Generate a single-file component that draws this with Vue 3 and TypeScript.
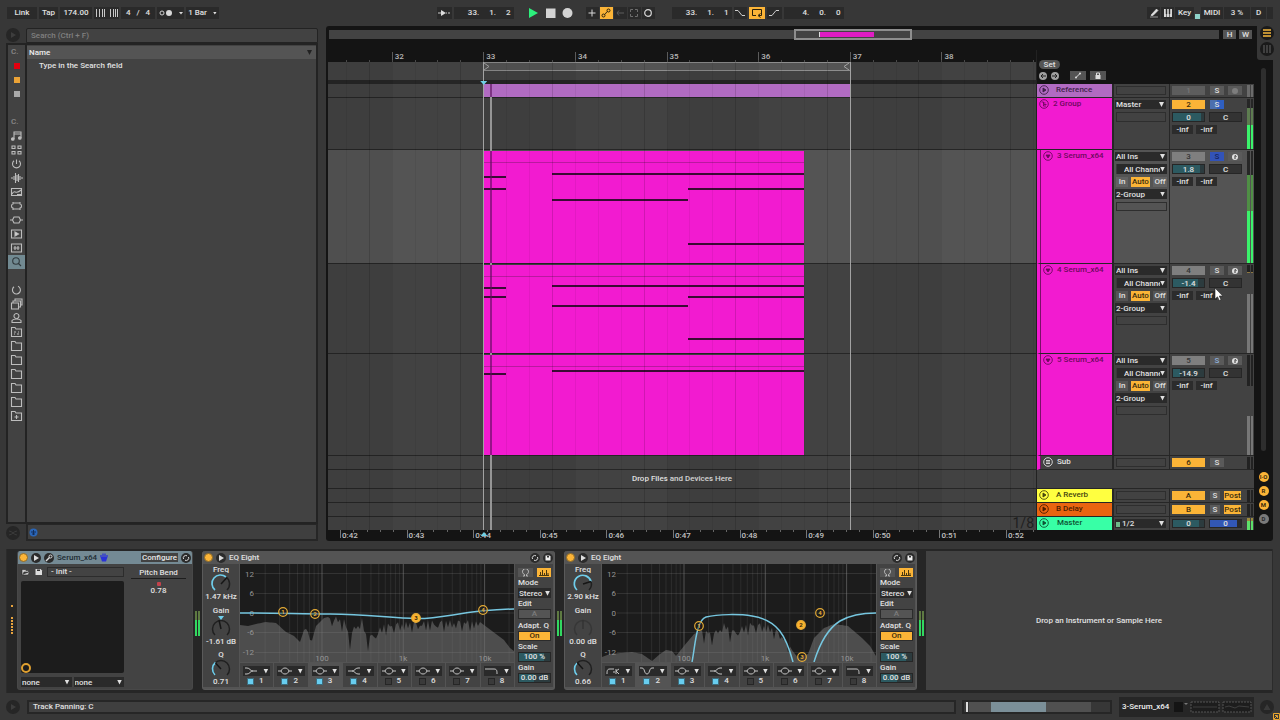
<script setup lang="ts">
import { ref } from 'vue'

interface Note { from: number; to: number; y: number }
interface Track {
  id: string
  name: string
  kind: string
  height: number
  icon: string
  io: string[]
  num: string
  numOn: boolean
  solo: string
  arm: string
  vol?: string
  fill?: number
  pan?: string
  notes?: Note[]
  clipEnd?: number
  meter: string
  cursor?: boolean
}

const LANE = 709
const pct = (px: number) => `${((px / LANE) * 100).toFixed(3)}%`
const barX = (bar: number) => 155.5 + (bar - 33) * 91.75
const bars = [32, 33, 34, 35, 36, 37, 38]
const shades = [31, 33, 35, 37].map((b) => ({ left: pct(Math.max(0, barX(b))), width: pct(b === 31 ? barX(32) : 91.75) }))
const beats = Array.from({ length: 31 }, (_, i) => barX(31.5 + i * 0.25)).filter((x) => x > 0 && x < LANE - 2)
const ticks = beats.map((x) => ({ left: pct(x) }))
const times = Array.from({ length: 11 }, (_, i) => ({ label: `0:${42 + i}`, left: pct(12 + i * 66.6) }))
const timeTicks = Array.from({ length: 53 }, (_, i) => ({ left: pct(12 + i * 13.32) }))
const crossing = (end: number) => ({ left: `${(6.5 / ((end - 33) * 91.75)) * 100}%` })

const tracks: Track[] = [
  { id: 'ref', name: 'Reference', kind: 'violet', height: 14, icon: 'play', io: ['blank'], num: '1', numOn: false, solo: '', arm: 'dot', clipEnd: 37, meter: 'm-idle' },
  { id: 'group', name: '2 Group', kind: 'pink', height: 52, icon: 'fold', io: ['Master', 'blank'], num: '2', numOn: true, solo: 'half', arm: '', vol: '0', fill: 90, pan: 'C', meter: 'm-group' },
  {
    id: 't3', name: '3 Serum_x64', kind: 'pink', height: 114, icon: 'down', io: ['All Ins', 'All Channels', 'monitor', '2-Group', 'blank'], num: '3', numOn: false, solo: 'on', arm: 'ready', vol: '1.8', fill: 86, pan: 'C', clipEnd: 36.5, meter: 'm-live',
    notes: [{ from: 0, to: 7, y: 25 }, { from: 0, to: 7, y: 37 }, { from: 21.5, to: 100, y: 22 }, { from: 21.5, to: 64, y: 48 }, { from: 64, to: 100, y: 37 }, { from: 64, to: 100, y: 92 }],
  },
  {
    id: 't4', name: '4 Serum_x64', kind: 'pink', height: 90, icon: 'down', io: ['All Ins', 'All Channels', 'monitor', '2-Group', 'blank'], num: '4', numOn: false, solo: '', arm: 'ready', vol: '-1.4', fill: 80, pan: 'C', clipEnd: 36.5, meter: 'm-low', cursor: true,
    notes: [{ from: 0, to: 7, y: 22 }, { from: 0, to: 7, y: 31 }, { from: 21.5, to: 100, y: 20 }, { from: 21.5, to: 64, y: 40 }, { from: 64, to: 100, y: 31 }, { from: 64, to: 100, y: 73 }],
  },
  {
    id: 't5', name: '5 Serum_x64', kind: 'pink', height: 102, icon: 'down', io: ['All Ins', 'All Channels', 'monitor', '2-Group', 'blank'], num: '5', numOn: false, solo: 'faint', arm: 'ready', vol: '-14.9', fill: 22, pan: 'C', clipEnd: 36.5, meter: 'm-tail',
    notes: [{ from: 0, to: 7, y: 18 }, { from: 21.5, to: 100, y: 15 }],
  },
  { id: 'sub', name: 'Sub', kind: 'grey', height: 14, icon: 'lines', io: ['blank'], num: '6', numOn: true, solo: '', arm: '', meter: 'm-off' },
]
const returns = [
  { id: 'A', name: 'A Reverb', kind: 'yellow' },
  { id: 'B', name: 'B Delay', kind: 'orange' },
]

const places = ['music', 'drums', 'instr', 'audio', 'midi', 'max', 'plug', 'clip', 'sample', 'search', 'gap', 'ring', 'packs', 'user', 'project', 'folder', 'folder', 'folder', 'folder', 'folder', 'add']

type Pt = [number, number]
const xf = (f: number) => 82 + 81.3 * Math.log10(f / 100)
const gridX: { x: number; major: boolean }[] = []
for (const d of [10, 100, 1000, 10000]) {
  for (let k = 1; k < 10; k++) {
    const x = xf(d * k)
    if (x > 3 && x < 274) gridX.push({ x, major: k === 1 })
  }
}
function spectrum(env: Pt[], from: number, to: number, amp: number): string {
  const out: string[] = ['0,98']
  for (let x = 0; x <= 274; x += 2) {
    let i = 0
    while (i < env.length - 2 && env[i + 1][0] < x) i++
    const [x0, y0] = env[i]
    const [x1, y1] = env[i + 1]
    let y = y0 + ((y1 - y0) * (x - x0)) / (x1 - x0)
    if (x > from && x < to) {
      const n = Math.abs(Math.sin(x * 1.93) * Math.cos(x * 0.71))
      y += n * n * amp
    }
    out.push(`${x},${y.toFixed(1)}`)
  }
  out.push('274,98')
  return out.join(' ')
}
const devices = [
  {
    id: 'eq1', freq: '1.47 kHz', gain: '-1.61 dB', q: '0.71', gainOn: true, active: 3,
    arc: 'M5 16 A8.500 8.500 0 0 1 16 3', rest: 'M16 3 A8.500 8.500 0 0 1 17 16', needle: 'M11 10 L16.500 4', gneedle: 'M11 14 L9 5', qneedle: 'M11 10 L5.500 4', qarc: 'M5 16 A8.500 8.500 0 0 1 5.500 3.500',
    types: ['lowshelf', 'bell', 'bell', 'highshelf', 'bell', 'bell', 'bell', 'cut'],
    curve: ['M0 49 C40 49 60 50 90 50 C130 50 150 54.500 178 54.500 C205 54.500 225 46 274 45'],
    dots: [{ n: 1, x: 43, y: 48, on: false }, { n: 2, x: 75, y: 50, on: false }, { n: 3, x: 176, y: 54, on: true }, { n: 4, x: 243, y: 46, on: false }],
    spec: spectrum([[0, 61], [8, 62], [25, 58], [36, 59], [46, 68], [54, 72], [60, 78], [64, 66], [67, 64], [71, 80], [76, 62], [84, 54], [92, 51], [104, 55], [110, 72], [115, 60], [122, 54], [127, 74], [134, 68], [144, 60], [158, 58], [180, 57], [210, 56], [230, 56], [240, 58], [252, 67], [264, 76], [270, 84], [274, 87]], 84, 240, 18),
  },
  {
    id: 'eq2', freq: '2.90 kHz', gain: '0.00 dB', q: '0.66', gainOn: false, active: 2,
    arc: 'M5 16 A8.500 8.500 0 1 1 19 7.500', rest: 'M19 7.500 A8.500 8.500 0 0 1 17 16', needle: 'M11 10 L19 7.500', gneedle: 'M11 14 L11 5', qneedle: 'M11 10 L5.500 4', qarc: 'M5 16 A8.500 8.500 0 0 1 5 4',
    types: ['highpass', 'notch', 'bell', 'highshelf', 'bell', 'bell', 'bell', 'cut'],
    curve: ['M90 98 C93 84 94 56 104 53 C116 50 138 50 150 52 C176 56 184 72 191 98', 'M212 98 C220 72 230 62 238 57 C250 50 262 49 274 49'],
    dots: [{ n: 1, x: 97, y: 62, on: false }, { n: 2, x: 199, y: 61, on: true }, { n: 3, x: 200, y: 93, on: false }, { n: 4, x: 218, y: 49, on: false }],
    spec: spectrum([[0, 93], [8, 90], [30, 88], [40, 90], [50, 97], [58, 90], [64, 86], [70, 87], [74, 92], [82, 82], [92, 70], [100, 66], [112, 68], [121, 58], [130, 66], [150, 58], [165, 60], [180, 68], [190, 86], [196, 94], [206, 90], [212, 74], [222, 64], [232, 60], [246, 62], [260, 74], [268, 82], [274, 92]], 100, 190, 18),
  },
]
const bandPaths: Record<string, string> = {
  lowshelf: 'M1 2 H3 C6 2 6 5 9 5 H13 M1 8 H3 C6 8 6 5 9 5',
  highshelf: 'M1 5 H5 C8 5 8 2 11 2 H13 M5 5 C8 5 8 8 11 8 H13',
  bell: 'M0 5 H3 C4 3 5 2 7 2 C9 2 10 3 11 5 H14 M3 5 C4 7 5 8 7 8 C9 8 10 7 11 5',
  cut: 'M0 3 H9 C12 3 12 5 12 8',
  highpass: 'M1 8 C1 5 1 3 4 3 H8 M7 6 H9 M10 3 V8 M10 5 L13 3 M10 5 L13 8',
  notch: 'M0 2 H2 C5 2 4 8 7 8 C10 8 9 2 12 2 H14',
}
const bandOn = ref([true, true, true, true, false, false, false, false])
const search = ref('')
</script>

<template>
  <div class="app">
    <header class="topbar">
      <div class="group">
        <button class="cell w-link">Link</button>
        <button class="cell w-tap">Tap</button>
        <button class="cell w-tempo">174.00</button>
        <button class="cell w-nudge" aria-label="Nudge tempo">
          <svg width="24" height="8" viewBox="0 0 24 8"><path d="M1.500 0V8M4.500 0V8M7.500 0V8M9.500 0V8M15.500 0V8M18.500 0V8M20.500 0V8M22.500 0V8" stroke="#c8c8c8" /></svg>
        </button>
        <button class="cell w-sig"><span>4</span><span>/</span><span>4</span></button>
        <button class="cell w-metro" aria-label="Metronome">
          <svg width="24" height="8" viewBox="0 0 24 8"><circle cx="3" cy="4" r="2" fill="none" stroke="#d0d0d0" /><circle cx="10" cy="4" r="3" fill="#d8d8d8" /><path d="M20 3h4l-2 2.500z" fill="#d8d8d8" /></svg>
        </button>
        <button class="cell w-quant">1 Bar<i class="tri small"></i></button>
      </div>
      <div class="group">
        <button class="cell w-15" aria-label="Follow">
          <svg width="12" height="8" viewBox="0 0 12 8"><path d="M0 4H3M8 4H9M10 4H12" stroke="#ccc" /><path d="M3 1L8 4L3 7z" fill="#ddd" /></svg>
        </button>
        <div class="cell w-wide"><span>33.</span><span>1.</span><span>2</span></div>
        <div class="transport">
          <button aria-label="Play"><svg width="11" height="12" viewBox="0 0 11 12"><path d="M1 1L10 6L1 11z" fill="#2cf07c" /></svg></button>
          <button aria-label="Stop"><svg width="11" height="12" viewBox="0 0 11 12"><path d="M1 1.500H10.500V11H1z" fill="#d4d4d4" /></svg></button>
          <button aria-label="Record"><svg width="11" height="12" viewBox="0 0 11 12"><circle cx="5.500" cy="6" r="5" fill="#d4d4d4" /></svg></button>
        </div>
        <div class="tools">
          <button class="cell w-13" aria-label="Overdub"><svg width="10" height="10" viewBox="0 0 10 10"><path d="M5 1.500V8.500M1.500 5H8.500" stroke="#d8d8d8" /></svg></button>
          <button class="cell w-13 amber" aria-label="Automation arm"><svg width="10" height="10" viewBox="0 0 10 10" fill="none" stroke="#2a210c"><circle cx="2.500" cy="7.500" r="1.500" /><circle cx="7.500" cy="2.500" r="1.500" /><path d="M3.500 6.500C5 6 5 4 6.500 3.500" /></svg></button>
          <button class="cell w-13" aria-label="Re-enable automation"><svg width="10" height="10" viewBox="0 0 10 10" fill="none" stroke="#5d5d5d"><path d="M9 5H2M4 2.500L2 5L4 7.500" /></svg></button>
          <button class="cell w-13" aria-label="Capture"><svg width="10" height="10" viewBox="0 0 10 10" fill="none" stroke="#6d6d6d"><path d="M1.500 4V1.500H4M6 1.500H8.500V4M8.500 6V8.500H6M4 8.500H1.500V6" /></svg></button>
          <button class="cell w-13" aria-label="Session record"><svg width="10" height="10" viewBox="0 0 10 10"><circle cx="5" cy="5" r="3.300" fill="none" stroke="#d8d8d8" stroke-width="1.200" /></svg></button>
        </div>
        <div class="cell w-wide"><span>33.</span><span>1.</span><span>1</span></div>
        <button class="cell w-13" aria-label="Punch in"><svg width="12" height="8" viewBox="0 0 12 8"><path d="M1 1.500H4L8 6.500H11" fill="none" stroke="#ccc" /></svg></button>
        <button class="cell w-16 amber" aria-label="Loop"><svg width="12" height="10" viewBox="0 0 12 10"><path d="M5 7.500H1.500V1.500H10.500V7.500H8M9.500 5.500L7 7.500L9.500 9.500" fill="none" stroke="#2a210c" /></svg></button>
        <button class="cell w-15" aria-label="Punch out"><svg width="12" height="8" viewBox="0 0 12 8"><path d="M1 6.500H4L8 1.500H11" fill="none" stroke="#ccc" /></svg></button>
        <div class="cell w-wide"><span>4.</span><span>0.</span><span>0</span></div>
      </div>
      <div class="group end">
        <button class="cell w-13" aria-label="Draw mode"><svg width="10" height="10" viewBox="0 0 10 10"><path d="M2 7L7.500 1L9 2.500L4 7.500H2zM1 9H9" fill="#e0e0e0" stroke="#e0e0e0" stroke-width=".6" /></svg></button>
        <button class="cell w-13" aria-label="Computer MIDI keyboard"><svg width="10" height="10" viewBox="0 0 10 10"><path d="M1 1H9V9H1z" fill="#d8d8d8" /><path d="M3.500 1V6M6.500 1V6" stroke="#2a2a2a" stroke-width="1.400" /><path d="M3.500 6V9M6.500 6V9" stroke="#2a2a2a" stroke-width=".6" /></svg></button>
        <button class="cell w-key">Key</button>
        <span class="led"></span>
        <button class="cell w-midi">MIDI</button>
        <div class="cell w-cpu">3 %</div>
        <div class="cell w-15">D</div>
        <div class="cell w-tail"></div>
      </div>
    </header>

    <main class="main">
      <section class="browser">
        <button class="round" aria-label="Show browser"><svg width="6" height="6" viewBox="0 0 6 6"><path d="M1 0L6 3L1 6z" fill="#3d3d3d" /></svg></button>
        <input v-model="search" class="search" aria-label="Search" placeholder="Search (Ctrl + F)" />
        <nav class="places">
          <span class="cat">C.</span>
          <span class="pcell"><i class="chip red"></i></span>
          <span class="pcell"><i class="chip gold"></i></span>
          <span class="pcell"><i class="chip silver"></i></span>
          <span class="pcell"></span>
          <span class="cat">C.</span>
          <button v-for="(p, i) in places" :key="i" class="pcell" :class="{ current: p === 'search' }" :aria-label="p">
            <svg width="13" height="12" viewBox="0 0 13 12" fill="none" stroke="#bdbdbd" stroke-width="1.100">
              <template v-if="p === 'music'"><path d="M4 9V2H11V8M4 4H11" /><circle cx="2.800" cy="9" r="1.300" fill="#bdbdbd" /><circle cx="9.800" cy="8" r="1.300" fill="#bdbdbd" /></template>
              <path v-else-if="p === 'drums'" d="M2 2H5V4.500H2zM8 2H11V4.500H8zM2 7.500H5V10H2zM8 7.500H11V10H8z" />
              <path v-else-if="p === 'instr'" d="M6.500 1.500V6M4 2.800A4 4 0 1 0 9 2.800" />
              <path v-else-if="p === 'audio'" d="M1 6H3M4 4V8M5.500 1V11M7 3V9M8.500 2V10M10 4V8M11 6H13" />
              <path v-else-if="p === 'midi'" d="M1.500 2.500H11.500V9.500H1.500zM2 8C5 2 5 10 11 4M7 8.500H11" />
              <path v-else-if="p === 'max'" d="M3 3H10M3 9H10M3 2V4C1 4 1 8 3 8V10M10 2V4C12 4 12 8 10 8V10" />
              <path v-else-if="p === 'plug'" d="M4 3H9L10.500 6L9 9H4L2.500 6zM0 6H2.500M10.500 6H13" />
              <template v-else-if="p === 'clip'"><path d="M1.500 2H11.500V10H1.500z" /><path d="M5 4L8.500 6L5 8z" fill="#ddd" /></template>
              <path v-else-if="p === 'sample'" d="M1.500 2H11.500V10H1.500zM3.500 6H9.500M5 4V8M8 4V8" />
              <template v-else-if="p === 'search'"><circle cx="6" cy="5" r="3.300" stroke="#30393d" /><path d="M8.500 7.500L11 10" stroke="#30393d" /></template>
              <path v-else-if="p === 'ring'" d="M8 2.300A4 4 0 1 1 4 2.800" />
              <path v-else-if="p === 'packs'" d="M1.500 5H8.500V11H1.500zM3 5V3H10.500V9H8.500M5 3V1H12V7H10.500" />
              <path v-else-if="p === 'user'" d="M2 10.500H11V8.500C10 7 8 7 6.500 7C5 7 3 7 2 8.500zM6.500 6.500A2.500 2.500 0 1 0 6.400 6.500" />
              <path v-else-if="p !== 'gap'" d="M1.500 10.500V1.500H5L6 3H11.500V10.500z" />
              <path v-if="p === 'project'" d="M4 6H6M8 6H9M4 8H5M7 8H9" />
              <path v-if="p === 'add'" d="M6.500 5V9M4.500 7H8.500" />
            </svg>
          </button>
        </nav>
        <div class="results">
          <div class="colhead">Name<i class="tri dark"></i></div>
          <p class="hint">Type in the Search field</p>
        </div>
        <button class="round foot" aria-label="Preview"><svg width="8" height="6" viewBox="0 0 8 6"><path d="M0 1C3 1 5 5 8 5M0 5C3 5 5 1 8 1" stroke="#3b3b3b" fill="none" /></svg></button>
        <div class="footer"><svg width="9" height="9" viewBox="0 0 9 9"><circle cx="4.500" cy="4.500" r="4" fill="#2a66b8" /><path d="M2 4H7M4.500 2V7M3 6H6" stroke="#132f5c" fill="none" /></svg></div>
      </section>

      <section class="arranger">
        <div class="view">
          <div class="overview">
            <div class="ovbar"><div class="ovbox"><div class="ovclip"></div></div></div>
            <button class="hw">H</button>
            <button class="hw">W</button>
          </div>
          <div class="timeline">
            <div class="headrow">
              <div class="rulers">
                <div class="ruler">
                  <span v-for="b in bars" :key="b" class="bar" :style="{ left: pct(barX(b)) }">{{ b }}</span>
                  <i v-for="(t, i) in ticks" :key="i" class="tick" :style="t"></i>
                </div>
                <div class="scrub">
                  <div class="loop" :style="{ left: pct(barX(33)), width: pct(367) }">
                    <svg width="7" height="7" viewBox="0 0 7 7"><path d="M1 0L6 3.500L1 7" fill="none" stroke="#a5a5a5" /></svg>
                    <svg width="7" height="7" viewBox="0 0 7 7"><path d="M6 0L1 3.500L6 7" fill="none" stroke="#a5a5a5" /></svg>
                  </div>
                </div>
              </div>
              <div class="locators">
                <button class="set">Set</button>
                <div class="locrow">
                  <button class="arrow" aria-label="Previous locator"><svg width="8" height="8" viewBox="0 0 8 8"><path d="M7 4H2M4 2L2 4L4 6" fill="none" stroke="#222" /></svg></button>
                  <button class="arrow" aria-label="Next locator"><svg width="8" height="8" viewBox="0 0 8 8"><path d="M1 4H6M4 2L6 4L4 6" fill="none" stroke="#222" /></svg></button>
                  <button class="lock first" aria-label="Automation mode"><svg width="8" height="7" viewBox="0 0 8 7"><path d="M2 5.500L6 1.500" stroke="#ddd" /><circle cx="2" cy="5.500" r="1" fill="#ddd" /><circle cx="6" cy="1.500" r="1" fill="#ddd" /></svg></button>
                  <button class="lock" aria-label="Lock envelopes"><svg width="8" height="7" viewBox="0 0 8 7"><path d="M1.500 3H6.500V7H1.500z" fill="#ddd" /><path d="M2.500 3V1H5.500V3" fill="none" stroke="#ddd" /></svg></button>
                </div>
              </div>
            </div>

            <div v-for="t in tracks" :key="t.id" class="track" :class="t.id" :style="{ minHeight: t.height + 'px' }">
              <div class="lane">
                <div v-if="t.clipEnd" class="clip" :class="t.kind" :style="{ left: pct(barX(33)), width: pct((t.clipEnd - 33) * 91.75) }">
                  <i v-for="(n, i) in t.notes" :key="i" class="note" :style="{ left: n.from + '%', width: n.to - n.from + '%', top: n.y + 'px' }"></i>
                  <i class="cross" :style="crossing(t.clipEnd)"></i>
                </div>
              </div>
              <div class="head" :class="t.kind">
                <svg class="ic" width="10" height="10" viewBox="0 0 10 10" fill="none" stroke="currentColor" stroke-width=".9">
                  <circle cx="5" cy="5" r="4.300" />
                  <path v-if="t.icon === 'play'" d="M4 3L7 5L4 7z" fill="currentColor" />
                  <path v-else-if="t.icon === 'down'" d="M3 4H7L5 7z" fill="currentColor" />
                  <path v-else-if="t.icon === 'fold'" d="M2.500 3H4.500V5.500H7.500M4.500 4H6.500M4.500 5.500V7H7" />
                  <path v-else d="M3 3.500H7M3 5H7M3 6.500H7" />
                </svg>
                <span>{{ t.name }}</span>
              </div>
              <div class="io">
                <template v-for="(o, i) in t.io" :key="i">
                  <span v-if="o === 'blank'" class="blank"></span>
                  <div v-else-if="o === 'monitor'" class="monitor"><button>In</button><button class="amber">Auto</button><button>Off</button></div>
                  <div v-else class="sel" :class="{ indent: o === 'All Channels' }"><select :aria-label="t.name + ' routing ' + (i + 1)"><option>{{ o }}</option></select><i class="tri"></i></div>
                </template>
              </div>
              <div class="mix">
                <div class="mrow">
                  <button class="num" :class="{ amber: t.numOn, dim: t.id === 'ref' }">{{ t.num }}</button>
                  <button class="solo" :class="t.solo">S</button>
                  <button v-if="t.arm" class="arm" :class="t.arm" aria-label="Arm"><svg width="8" height="8" viewBox="0 0 8 8"><circle cx="4" cy="4" r="3" fill="currentColor" /><path v-if="t.arm === 'ready'" d="M4 6V2.500L5.500 3.500" stroke="#333" fill="none" /></svg></button>
                </div>
                <div v-if="t.vol" class="mrow">
                  <input class="val vol" :aria-label="t.name + ' volume'" :value="t.vol" :style="{ '--fill': t.fill + '%' }" />
                  <input class="val pan" :aria-label="t.name + ' pan'" :value="t.pan" />
                </div>
                <div v-if="t.vol" class="mrow peaks"><span>-inf</span><span>-inf</span></div>
                <div class="meter" :class="t.meter"><i></i><i></i></div>
                <svg v-if="t.cursor" class="pointer" width="9" height="13" viewBox="0 0 9 13"><path d="M1 0V11L3.500 8.800L5.200 12.500L7 11.700L5.300 8H8.800z" fill="#fff" stroke="#222" stroke-width=".6" /></svg>
              </div>
            </div>

            <div class="drop"><div class="lane">Drop Files and Devices Here</div><div class="rest"></div></div>

            <div v-for="r in returns" :key="r.id" class="track">
              <div class="lane"></div>
              <div class="head" :class="r.kind">
                <svg class="ic" width="10" height="10" viewBox="0 0 10 10" fill="none" stroke="currentColor" stroke-width=".9"><circle cx="5" cy="5" r="4.300" /><path d="M4 3L7 5L4 7z" fill="currentColor" /></svg>
                <span>{{ r.name }}</span>
              </div>
              <div class="io"><span class="blank"></span></div>
              <div class="mix">
                <div class="mrow"><button class="num amber">{{ r.id }}</button><button class="solo narrow">S</button><button class="post amber">Post</button></div>
                <div class="meter m-off"><i></i><i></i></div>
              </div>
            </div>
            <div class="track last">
              <div class="lane zoomlabel">1/8</div>
              <div class="head mint">
                <svg class="ic" width="10" height="10" viewBox="0 0 10 10" fill="none" stroke="currentColor" stroke-width=".9"><circle cx="5" cy="5" r="4.300" /><path d="M4 3L7 5L4 7z" fill="currentColor" /></svg>
                <span>Master</span>
              </div>
              <div class="io"><div class="sel out"><select aria-label="Master output"><option>1/2</option></select><i class="tri"></i></div></div>
              <div class="mix">
                <div class="mrow"><input class="val vol master" aria-label="Master volume" value="0" /><input class="val blue" aria-label="Cue volume" value="0" /></div>
                <div class="meter m-master"><i></i><i></i></div>
              </div>
            </div>

            <div class="gridlay under">
              <i v-for="(s, i) in shades" :key="i" class="shade" :style="s"></i>
              <i class="playhead" :style="{ left: pct(162) }"></i>
            </div>
            <div class="gridlay over">
              <i v-for="(t, i) in ticks" :key="i" class="beat" :style="t"></i>
              <i class="marker" :style="{ left: pct(barX(33)) }"></i>
              <i class="marker" :style="{ left: pct(barX(37)) }"></i>
              <i class="flag" :style="{ left: pct(barX(33)) }"></i>
            </div>
          </div>
          <div class="timeruler">
            <div class="tr">
              <i v-for="(t, i) in timeTicks" :key="i" class="tick" :style="t"></i>
              <span v-for="t in times" :key="t.label" class="time" :style="{ left: t.left }">{{ t.label }}</span>
              <i class="flag" :style="{ left: pct(barX(33)) }"></i>
            </div>
          </div>
        </div>
        <aside class="gutter">
          <div class="tabs">
            <button class="tab" aria-label="Arrangement view"><svg width="14" height="14" viewBox="0 0 14 14"><path d="M3 4H11M3 7H11M3 10H11" stroke="#f3b73c" stroke-width="1.500" /></svg></button>
            <button class="tab" aria-label="Session view"><svg width="14" height="14" viewBox="0 0 14 14"><path d="M4 3V11M7 3V11M10 3V11" stroke="#4c4c4c" stroke-width="1.500" /></svg></button>
          </div>
          <div class="scroll"></div>
          <div class="shows">
            <button>I·O</button><button>R</button><button>M</button><button class="off">D</button>
          </div>
        </aside>
      </section>
    </main>

    <section class="devices">
      <div class="strip"><i v-for="n in 7" :key="n"></i></div>
      <article class="device serum">
        <div class="dhead">
          <i class="power"></i>
          <button class="dbtn" aria-label="Unfold"><svg width="8" height="8" viewBox="0 0 8 8"><path d="M2 1L7 4L2 7z" fill="#ddd" /></svg></button>
          <button class="dbtn" aria-label="Plug-in window"><svg width="8" height="8" viewBox="0 0 8 8"><path d="M1 7L4.500 3.500" stroke="#ddd" stroke-width="1.500" /><circle cx="5.500" cy="2.500" r="1.500" fill="none" stroke="#ddd" /></svg></button>
          <h2>Serum_x64</h2>
          <svg width="8" height="9" viewBox="0 0 8 9"><path d="M1 4V2M3 4V0.500M5 4V0.500M7 4V2" stroke="#2a32d8" stroke-width="1.300" /><path d="M0.500 4H7.500L6 8.500H2z" fill="#2a32d8" /></svg>
          <button class="configure">Configure</button>
          <button class="dbtn" aria-label="Hot-swap"><svg width="8" height="8" viewBox="0 0 8 8" fill="none" stroke="#ddd"><path d="M1.500 5A2.500 2.500 0 0 1 5 1.800M6.500 3A2.500 2.500 0 0 1 3 6.200" /></svg></button>
        </div>
        <div class="sbody">
          <div class="spad">
            <div class="preset">
              <svg width="9" height="8" viewBox="0 0 9 8"><path d="M1 7V1.500H4L5 2.500H7.500V4H3L1.500 7H7L8.500 4" fill="#ccc" stroke="#222" stroke-width=".5" /></svg>
              <svg width="9" height="8" viewBox="0 0 9 8"><path d="M1.500 1H6.500L8 2.500V7H1.500z" fill="#ddd" /><path d="M3 1.500H6V3H3z" fill="#333" /></svg>
              <input aria-label="Preset" value="- Init -" />
            </div>
            <div class="xy"><i></i></div>
            <div class="axes">
              <div class="sel"><select aria-label="X axis"><option>none</option></select><i class="tri"></i></div>
              <div class="sel"><select aria-label="Y axis"><option>none</option></select><i class="tri"></i></div>
            </div>
          </div>
          <div class="param"><span class="plabel">Pitch Bend</span><i></i><span>0.78</span></div>
        </div>
      </article>
      <div class="dmeter"><i></i><i></i></div>

      <template v-for="d in devices" :key="d.id">
        <article class="device eq">
          <div class="dhead">
            <i class="power"></i>
            <button class="dbtn" aria-label="Unfold"><svg width="8" height="8" viewBox="0 0 8 8"><path d="M2 1L7 4L2 7z" fill="#ddd" /></svg></button>
            <h2>EQ Eight</h2>
            <button class="dbtn push" aria-label="Hot-swap"><svg width="8" height="8" viewBox="0 0 8 8" fill="none" stroke="#ddd"><path d="M1.500 5A2.500 2.500 0 0 1 5 1.800M6.500 3A2.500 2.500 0 0 1 3 6.200" /></svg></button>
            <button class="dbtn" aria-label="Save preset"><svg width="8" height="8" viewBox="0 0 8 8"><path d="M1.500 1.500H5.500L6.500 2.500V6.500H1.500z" fill="#eee" /><path d="M3 2H5V3.500H3z" fill="#333" /></svg></button>
          </div>
          <div class="ebody">
            <div class="knobs">
              <div class="knob"><span>Freq</span>
                <svg width="22" height="18" viewBox="0 0 22 18" fill="none"><path :d="d.rest" stroke="#202020" stroke-width="1.500" /><path :d="d.arc" stroke="#6fcdea" stroke-width="1.700" /><path :d="d.needle" stroke="#161616" stroke-width="1.500" /></svg>
                <span>{{ d.freq }}</span></div>
              <div class="knob" :class="{ faint: !d.gainOn }"><span>Gain</span>
                <svg width="22" height="22" viewBox="0 0 22 22" fill="none"><path d="M5 20A8.500 8.500 0 1 1 17 20" stroke="#202020" stroke-width="1.500" /><path :d="d.gneedle" stroke="#161616" stroke-width="1.500" /><path v-if="d.gainOn" d="M8 1H14L11 5z" fill="#6fcdea" /></svg>
                <span>{{ d.gain }}</span></div>
              <div class="knob"><span>Q</span>
                <svg width="22" height="18" viewBox="0 0 22 18" fill="none"><path d="M5 16A8.500 8.500 0 1 1 17 16" stroke="#202020" stroke-width="1.500" /><path :d="d.qarc" stroke="#6fcdea" stroke-width="1.700" /><path :d="d.qneedle" stroke="#161616" stroke-width="1.500" /></svg>
                <span>{{ d.q }}</span></div>
            </div>
            <div class="center">
              <svg class="graph" viewBox="0 0 274 98" role="img" aria-label="Frequency response">
                <rect width="274" height="98" fill="#1c1c1c" />
                <polygon :points="d.spec" fill="#4d4d4d" />
                <path v-for="(g, i) in gridX" :key="i" :d="`M${g.x} 0V98`" :stroke="g.major ? '#6a6a6a' : '#8a8a8a'" :stroke-opacity="g.major ? 0.7 : 0.16" />
                <path d="M15 9.500H274M15 29.500H274M15 49H274M15 68.500H274M15 88.500H274" stroke="#8a8a8a" stroke-opacity=".22" />
                <g class="scale" text-anchor="end">
                  <text x="14" y="13">12</text><text x="14" y="32">6</text><text x="14" y="52">0</text><text x="14" y="71">-6</text><text x="14" y="91">-12</text>
                </g>
                <g class="scale" text-anchor="middle"><text x="82" y="97">100</text><text x="163" y="97">1k</text><text x="245" y="97">10k</text></g>
                <path v-for="(c, i) in d.curve" :key="'c' + i" :d="c" fill="none" stroke="#76c6df" stroke-width="1.500" />
                <g v-for="p in d.dots" :key="p.n" class="pin">
                  <circle :cx="p.x" :cy="p.y" r="4.300" :fill="p.on ? '#fbb32f' : '#1c1c1c'" :fill-opacity="p.on ? 1 : 0.4" stroke="#e5ab35" stroke-width="1.200" />
                  <text :x="p.x" :y="p.y + 2" text-anchor="middle" :fill="p.on ? '#33270c' : '#e5ab35'">{{ p.n }}</text>
                </g>
              </svg>
              <div class="bands">
                <div v-for="(ty, i) in d.types" :key="i" class="band" :class="{ active: i + 1 === d.active }">
                  <button class="btype" :aria-label="'Filter type ' + (i + 1)"><svg width="14" height="10" viewBox="0 0 14 10"><path :d="bandPaths[ty]" fill="none" stroke="#c4c4c4" /></svg><i class="tri"></i></button>
                  <label><input v-model="bandOn[i]" type="checkbox" />{{ i + 1 }}</label>
                </div>
              </div>
            </div>
            <div class="opts">
              <div class="obtns">
                <button aria-label="Audition"><svg width="9" height="8" viewBox="0 0 9 8"><path d="M2 7H3.500V5.500A3 3 0 1 1 5.500 5.500V7H7" fill="none" stroke="#bbb" /></svg></button>
                <button class="amber" aria-label="Analyze"><svg width="12" height="7" viewBox="0 0 12 7"><path d="M1 6.500H11M2.500 3V6M4.500 1V6M6.500 4V6M8.500 1V6M10 4V6" stroke="#4a380f" /></svg></button>
              </div>
              <div class="opt"><span>Mode</span><div class="sel"><select aria-label="Mode"><option>Stereo</option></select><i class="tri"></i></div></div>
              <div class="opt"><span>Edit</span><button class="mute">A</button></div>
              <div class="opt"><span>Adapt. Q</span><button class="amber">On</button></div>
              <div class="opt"><span>Scale</span><input class="val vol scaleval" aria-label="Scale" value="100 %" /></div>
              <div class="opt"><span>Gain</span><input class="val vol gainval" aria-label="Output gain" value="0.00 dB" /></div>
            </div>
          </div>
        </article>
        <div class="dmeter"><i></i><i></i></div>
      </template>
      <div class="dropdev">Drop an Instrument or Sample Here</div>
    </section>

    <footer class="status">
      <button class="round" aria-label="Help view"><svg width="6" height="6" viewBox="0 0 6 6"><path d="M1 0L6 3L1 6z" fill="#3d3d3d" /></svg></button>
      <div class="msg">Track Panning: C</div>
      <div class="chainview"><i class="now"></i><i class="wide"><i class="part"></i></i></div>
      <div class="chain">
        <span>3-Serum_x64</span>
        <svg width="80" height="12" viewBox="0 0 80 12"><path d="M1 1H10V11H1z" fill="#141414" /><path d="M18 1H46V11H18zM50 1H78V11H50z" fill="#1d1d1d" stroke="#555" stroke-dasharray="2 1" /><path d="M20 6H44M52 6L56 5L62 7L66 5L76 6" stroke="#3f3f3f" fill="none" /><path d="M11 2L15 2L13 4" fill="#777" /></svg>
      </div>
      <button class="round warn" aria-label="Status"><svg width="8" height="8" viewBox="0 0 8 8"><path d="M0.500 7L4 1L7.500 7z" fill="#3a3a3a" /></svg></button>
      <svg class="corner" width="7" height="7" viewBox="0 0 7 7"><path d="M.5.500H6.500V6.500H.5zM1 6L4 3M2 2.500H4.500V5" fill="none" stroke="#e8a52e" /></svg>
    </footer>
  </div>
</template>

<style>
html, body { margin: 0; background: #373737; }
</style>

<style scoped>
* { box-sizing: border-box; }
.app { min-height: 100vh; display: flex; flex-direction: column; background: #373737; color: #e0e0e0; font: 500 8px/10px Roboto, "Noto Sans", sans-serif; overflow: hidden; position: relative; }
button, input, select { font: inherit; color: inherit; border: 0; padding: 0; margin: 0; background: none; border-radius: 0; appearance: none; outline: none; min-width: 0; }
button { display: flex; align-items: center; justify-content: center; }
svg { display: block; flex: none; }
h2, p { margin: 0; font: inherit; }
.tri { flex: none; width: 5px; height: 5px; background: #e0e0e0; clip-path: polygon(0 0, 100% 0, 50% 100%); }
.tri.small { width: 4px; height: 3px; }
.tri.dark { background: #222; }
.amber { background: #fbb437 !important; color: #3b2c0c !important; }

.topbar { display: grid; grid-template-columns: 1fr auto 1fr; padding: 7px; }
.group { display: flex; gap: 2px; height: 12px; }
.group.end { justify-content: flex-end; gap: 1px; }
.cell { height: 12px; background: #2a2a2a; display: flex; align-items: center; justify-content: center; white-space: nowrap; }
.w-link { width: 30px; } .w-tap { width: 19px; } .w-tempo { width: 32px; } .w-nudge { width: 25px; } .w-sig { width: 34px; gap: 6px; } .w-metro { width: 27px; } .w-quant { width: 33px; gap: 6px; }
.w-13 { width: 13px; } .w-15 { width: 15px; } .w-16 { width: 16px; } .w-key { width: 19px; } .w-midi { width: 22px; } .w-cpu { width: 26px; } .w-tail { width: 6px; }
.w-wide { width: 60px; justify-content: flex-end; gap: 10px; padding-right: 3px; }
.transport { display: flex; gap: 6px; padding: 0 11px 0 12px; }
.tools { display: flex; gap: 1px; padding-right: 15px; }
.led { width: 5px; height: 5px; background: #8fd3c9; align-self: flex-end; }

.main { display: flex; flex: 1; gap: 8px; padding: 0 7px 0 6px; }
.browser { width: 312px; flex: none; display: grid; grid-template-columns: 20px 1fr; grid-template-rows: 17px 1fr 17px; }
.round { width: 14px; height: 14px; border-radius: 50%; background: #262626; align-self: center; }
.search { margin-top: 2px; height: 15px; border: 1px solid #232323; border-radius: 2px 2px 0 0; background: #424242; padding-left: 4px; width: 100%; }
.search::placeholder { color: #808080; opacity: 1; }
.places { background: #424242; border: 2px solid #232323; border-right-width: 1px; display: flex; flex-direction: column; }
.pcell { height: 14px; flex: none; display: flex; align-items: center; justify-content: center; width: 100%; }
.cat { height: 14px; padding: 2px 3px; color: #898989; }
.pcell.current { background: #718991; }
.chip { width: 6px; height: 6px; }
.red { background: #e3000f; } .gold { background: #eba336; } .silver { background: #a9a9a9; }
.results { background: #424242; border: solid #232323; border-width: 2px 2px 2px 1px; }
.colhead { height: 13px; margin-top: 1px; background: #545454; padding: 0 4px 0 2px; display: flex; align-items: center; justify-content: space-between; color: #ececec; }
.hint { padding: 2px 12px; line-height: 10px; }
.footer { border: 2px solid #262626; border-top-width: 1px; background: #3f3f3f; padding: 3px 1px; }

.arranger { flex: 1; min-width: 0; display: flex; background: #141414; border-radius: 3px; }
.view { flex: 1; min-width: 0; display: flex; flex-direction: column; padding-left: 2px; }
.overview { height: 24px; display: flex; padding: 4px 2px 0 1px; gap: 3px; }
.ovbar { flex: 1; height: 9px; background: #434343; margin-right: 1px; }
.ovbox { margin-left: 52.3%; width: 13.2%; height: 11px; margin-top: -1px; border: 2px solid #8e8e8e; display: flex; align-items: center; }
.ovclip { margin-left: 20%; width: 48%; height: 5px; border-left: 1px solid #ddd; background: #e01cc4; }
.hw { width: 13px; height: 9px; background: #545454; }
.timeline { position: relative; }
.headrow, .track, .drop { display: grid; grid-template-columns: minmax(0, 1fr) 77px 56px 84px; }
.headrow { height: 34px; }
.rulers { display: flex; flex-direction: column; border-right: 1px solid #222; }
.ruler { height: 12px; position: relative; overflow: hidden; color: #b8b8b8; }
.bar { position: absolute; bottom: 0; height: 10px; padding-left: 2px; border-left: 1px solid #5b5b5b; }
.tick { position: absolute; bottom: 0; width: 1px; height: 2px; background: #4a4a4a; }
.scrub { flex: 1; background: #424242; border-bottom: 4px solid #262626; position: relative; }
.loop { position: absolute; top: 0; height: 9px; background: #545454; border: solid #8d8d8d; border-width: 1px 0; display: flex; justify-content: space-between; }
.locators { grid-column: span 3; padding: 10px 2px 0; }
.set { width: 21px; height: 9px; border-radius: 5px; background: #545454; }
.locrow { display: flex; gap: 4px; margin-top: 2px; align-items: center; }
.arrow { width: 8px; height: 8px; border-radius: 50%; background: #a0a0a0; }
.lock { width: 16px; height: 9px; background: #545454; }
.lock.first { margin-left: 7px; }

.track { min-height: 14px; background: #424242; }
.track.last { min-height: 13px; }
.lane, .head, .io, .mix { border-bottom: 1px solid #262626; }
.lane { position: relative; border-right: 1px solid #222; min-width: 0; }
.t3 { background: #545454; }
.clip { position: absolute; inset: 1px auto 0 0; z-index: 1; overflow: hidden; }
.clip.violet { background: #b16bc2; top: 0; }
.clip.pink { background: linear-gradient(#f21bd0 11px, #b91a9f 11px 12px, #f21bd0 12px); }
.note { position: absolute; height: 2px; background: #3a0b34; }
.cross { position: absolute; top: 0; bottom: 0; width: 2px; background: rgba(90, 15, 90, .6); }
.head { display: flex; gap: 4px; padding: 1px 0 0 2px; border-right: 2px solid #262626; white-space: nowrap; }
.head.violet { background: #b16bc2; color: #401f49; }
.head.violet span, .yellow span, .orange span { margin-left: 3px; }
.mint span { margin-left: 4px; }
.head.pink { background: #f21bd0; color: #6d095d; }
.t3 .head, .t4 .head, .t5 .head, .sub .head { border-left: 3px solid #f21bd0; box-shadow: inset 1px 0 #7a1068; padding-left: 3px; }
.head.grey { background: #424242; color: #e2e2e2; }
.head.yellow { background: #ffff40; color: #46450f; }
.head.orange { background: #ea6410; color: #4b1c00; }
.head.mint { background: #38ffa6; color: #0e5233; }
.last > div { border-bottom: 0; }
.io, .mix { display: grid; grid-auto-rows: 9px; row-gap: 3px; align-content: start; }
.io { padding: 2px 3px 0 1px; border-right: 1px solid #262626; }
.mix { position: relative; padding: 2px 0 0 2px; }
.t3 .io, .t4 .io, .t5 .io { grid-template-rows: 9px 10px 9px 10px 9px; }
.t3 .mix, .t4 .mix, .t5 .mix, .track.group .mix { grid-template-rows: 9px 10px 9px; }
.track.group { height: auto; gap: 0; }
.track.group .io { grid-template-rows: 9px 10px; }
.blank { border: 1px solid #2e2e2e; margin-left: 1px; }
.sel { display: flex; align-items: center; background: #2a2a2a; padding: 0 2px 0 1px; min-width: 0; height: 100%; }
.sel select { flex: 1; width: 0; height: 100%; line-height: 9px; text-overflow: clip; overflow: hidden; }
.sel.indent { padding-left: 7px; margin-left: 1px; border-left: 1px solid #3a3a3a; }
.sel.out { padding-left: 7px; background: linear-gradient(#6fb88a, #6fb88a) 1px 3px / 4px 5px no-repeat #2a2a2a; }
.monitor { display: grid; grid-template-columns: 12px 19px 14px; gap: 3px; padding-left: 1px; }
.monitor button { background: #545454; }
.t3 .monitor button { background: #626262; }
.mrow { display: flex; gap: 4px; height: 100%; }
.num { width: 33px; background: #7f7f7f; color: #333; }
.num.dim { background: #5d5d5d; color: #777; }
.solo { width: 14px; background: #5a5a5a; margin-left: 1px; }
.solo.on { background: #3253b8; color: #16255e; }
.solo.half { background: linear-gradient(90deg, #4c6fae 50%, #2f5fc0 50%); }
.solo.faint { color: #8fb0dc; }
.arm { width: 14px; background: #5a5a5a; }
.arm.dot { color: #7d7d7d; }
.solo.narrow { width: 10px; }
.post { width: 17px; }
.val { width: 33px; height: 100%; text-align: center; border: 1px solid #262626; background: #333; }
.vol { background: linear-gradient(90deg, #2c5a61 var(--fill), #2c3b3e var(--fill)); }
.vol.master { --fill: 84%; }
.vol.scaleval { --fill: 82%; }
.vol.gainval { --fill: 50%; }
.blue { background: linear-gradient(90deg, #3257b5 86%, #2a2a2a 86%); }
.peaks { gap: 3px; }
.peaks span { width: 21px; background: #2c2c2c; text-align: center; line-height: 9px; }
.meter { position: absolute; top: 1px; bottom: 0; right: 1px; width: 6px; display: flex; gap: 1px; }
.meter i { flex: 1; background: #222; }
.meter.m-idle i { background: #6b6b6b; }
.meter.m-group i { background: linear-gradient(#262626 9px, #5d7c50 9px 26px, #3bf26b 26px); }
.meter.m-live i { background: linear-gradient(#262626 24px, #4f8f45 24px 60px, #3bf26b 60px); }
.meter.m-low i { background: linear-gradient(#222 7px, #8d7640 7px 8px, #424242 8px 29px, #777 29px); }
.meter.m-tail i { background: linear-gradient(#222 31px, #424242 31px 61px, #777 61px); }
.meter.m-master i { background: linear-gradient(#9a8a3c 3px, #5de06a 3px); }
.pointer { position: absolute; left: 44px; top: 24px; z-index: 3; }
.drop { min-height: 19px; background: #424242; }
.drop .lane { display: flex; align-items: center; justify-content: center; }
.drop .rest { grid-column: span 3; border-bottom: 1px solid #262626; }
.zoomlabel { text-align: right; padding-right: 2px; font-size: 14px; line-height: 13px; font-weight: 400; color: #1f1f1f; }

.gridlay { position: absolute; inset: 12px 218px 0 0; pointer-events: none; overflow: hidden; }
.gridlay.over { z-index: 2; }
.gridlay i { position: absolute; top: 0; bottom: 0; }
.shade { background: rgba(0, 0, 0, .06); }
.beat { width: 1px; background: rgba(0, 0, 0, .06); }
.beat:nth-of-type(4n + 2) { background: rgba(0, 0, 0, .14); }
.marker { width: 1px; background: #a2a2a2; }
.playhead { width: 2px; margin-top: 24px; background: #959595; }
.gridlay .flag, .tr .flag { bottom: auto; top: 19px; width: 7px; height: 4px; margin-left: -3px; background: #6fcfe4; clip-path: polygon(0 0, 100% 0, 50% 100%); }
.tr .flag { position: absolute; top: 2px; clip-path: polygon(50% 0, 100% 100%, 0 100%); }
.timeruler { height: 11px; padding-right: 217px; }
.tr { position: relative; height: 11px; overflow: hidden; color: #c2c2c2; }
.tr .tick { top: 0; bottom: auto; background: #666; }
.time { position: absolute; top: 0; height: 8px; border-left: 1px solid #777; padding-left: 1px; line-height: 11px; }

.gutter { width: 19px; flex: none; display: flex; flex-direction: column; align-items: center; }
.tabs { align-self: stretch; margin-left: 3px; height: 34px; padding-left: 3px; background: #373737; border-bottom-left-radius: 3px; display: flex; flex-direction: column; gap: 2px; }
.tab { width: 14px; height: 14px; border-radius: 50%; background: #1a1a1a; }
.scroll { flex: 1; width: 5px; margin: 8px 0 21px; border-radius: 3px; background: #2e2e2e; }
.shows { display: flex; flex-direction: column; gap: 4px; padding-bottom: 17px; }
.shows button { width: 10px; height: 10px; border-radius: 50%; background: #fbb437; color: #3b2c0c; font-size: 6px; line-height: 10px; font-weight: 700; }
.shows .off { background: #7a7a7a; color: #2a2a2a; }

.devices { display: flex; margin: 8px 7px 0 6px; padding: 2px 0 3px; background: #262626; border: solid #2b2b2b; border-width: 0 1px; }
.strip { width: 10px; display: flex; flex-direction: column; gap: 1px; align-items: center; padding-top: 66px; }
.strip i { width: 2px; height: 2px; background: #e8a33d; flex: none; }
.strip i:first-child { margin-top: -12px; margin-bottom: 9px; }
.device { border-radius: 3px; background: #545454; overflow: hidden; flex: none; border: 1px solid #5a5a5a; border-top: 0; }
.dhead { height: 13px; display: flex; align-items: center; gap: 3px; padding: 0 1px; }
.power { width: 9px; height: 9px; border-radius: 50%; background: #fbb437; border: 1px solid #8a6a2a; }
.dbtn { width: 10px; height: 10px; border-radius: 50%; background: #2b2b2b; }
.push { margin-left: auto; }
.serum { width: 176px; background: #434343; border-color: #484848; }
.serum .dhead { background: #748a94; color: #1e2c33; }
.configure { margin-left: auto; height: 9px; padding: 0 1px; background: #424242; color: #e8e8e8; }
.sbody { display: flex; padding: 3px 3px 2px; gap: 7px; }
.spad { width: 103px; display: flex; flex-direction: column; gap: 4px; }
.preset { display: flex; gap: 4px; height: 10px; align-items: center; }
.preset input { flex: 1; height: 10px; border: 1px solid #2c2c2c; padding-left: 3px; }
.xy { height: 92px; background: #1c1c1c; border-radius: 2px; display: flex; align-items: flex-end; }
.xy i { width: 10px; height: 10px; border: 2px solid #e0a030; border-radius: 50%; }
.axes { display: grid; grid-template-columns: 1fr 1fr; gap: 2px; height: 10px; }
.param { width: 55px; text-align: center; padding-top: 1px; display: flex; flex-direction: column; align-items: stretch; }
.plabel { border-bottom: 1px solid #1e1e1e; line-height: 10px; }
.param i { width: 4px; height: 4px; margin: 3px auto 0; background: #c3424c; border-radius: 1px; }
.dmeter { width: 9px; flex: none; display: flex; justify-content: center; gap: 1px; padding-top: 60px; }
.dmeter i { width: 2px; height: 25px; background: linear-gradient(#5e7a42 9px, #32d860 9px); }

.eq { width: 353px; }
.ebody { display: flex; padding: 0 1px 1px 0; gap: 1px; }
.knobs { width: 36px; background: #434343; display: flex; flex-direction: column; justify-content: space-between; padding: 1px 0; }
.knob { display: flex; flex-direction: column; align-items: center; line-height: 9px; white-space: nowrap; }
.knob svg { overflow: visible; }
.knob.faint svg { opacity: .35; }
.center { flex: 1; min-width: 0; }
.graph { width: 100%; height: auto; }
.scale text { font-size: 8px; fill: #959595; font-weight: 400; }
.pin text { font-size: 6px; font-weight: 700; }
.bands { display: grid; grid-template-columns: repeat(8, 1fr); gap: 1px; margin-top: 1px; }
.band { background: #434343; padding: 3px 3px 0; height: 24px; }
.band.active { background: #545454; }
.btype { width: 100%; height: 10px; background: #2a2a2a; justify-content: space-between; padding: 0 2px 0 1px; }
.band label { display: flex; align-items: center; gap: 5px; padding-left: 4px; line-height: 10px; }
.band input { width: 7px; height: 7px; background: #3a3a3a; border: 1px solid #262626; }
.band input:checked { background: #68cdef; border-color: #3d6c7c; }
.opts { width: 38px; background: #434343; padding: 4px 2px 4px 3px; display: flex; flex-direction: column; justify-content: space-between; white-space: nowrap; }
.obtns { display: flex; gap: 4px; height: 9px; }
.obtns button { flex: 1; background: #545454; }
.opt { display: flex; flex-direction: column; }
.opt > span { line-height: 10px; }
.opt .sel, .opt button, .opt .val { height: 10px; width: 100%; }
.opt .sel { padding: 0 1px; }
.opt button { border: 1px solid #2b2b2b; }
.opt .mute { background: #545454; color: #7c7c7c; }
.dropdev { flex: 1; min-width: 0; background: #424242; display: flex; align-items: center; justify-content: center; }

.status { display: flex; align-items: center; height: 14px; margin: 7px 6px 7px; }
.msg { flex: 1; height: 14px; margin-left: 7px; border: 2px solid #262626; background: #3f3f3f; padding-left: 4px; }
.chainview { width: 150px; height: 14px; margin-left: 6px; border: 2px solid #262626; padding-left: 2px; display: flex; gap: 1px; }
.now { width: 2px; background: #ddd; }
.wide { width: 122px; background: #505050; padding-left: 22px; display: flex; }
.part { width: 55px; background: #7b8f98; }
.chain { width: 135px; height: 20px; margin: -3px 0 -3px 7px; background: #262626; display: flex; align-items: center; gap: 4px; padding-left: 3px; color: #f0f0f0; white-space: nowrap; overflow: hidden; }
.warn { margin-left: 6px; }
.corner { position: absolute; right: 0; bottom: 1px; }
</style>
